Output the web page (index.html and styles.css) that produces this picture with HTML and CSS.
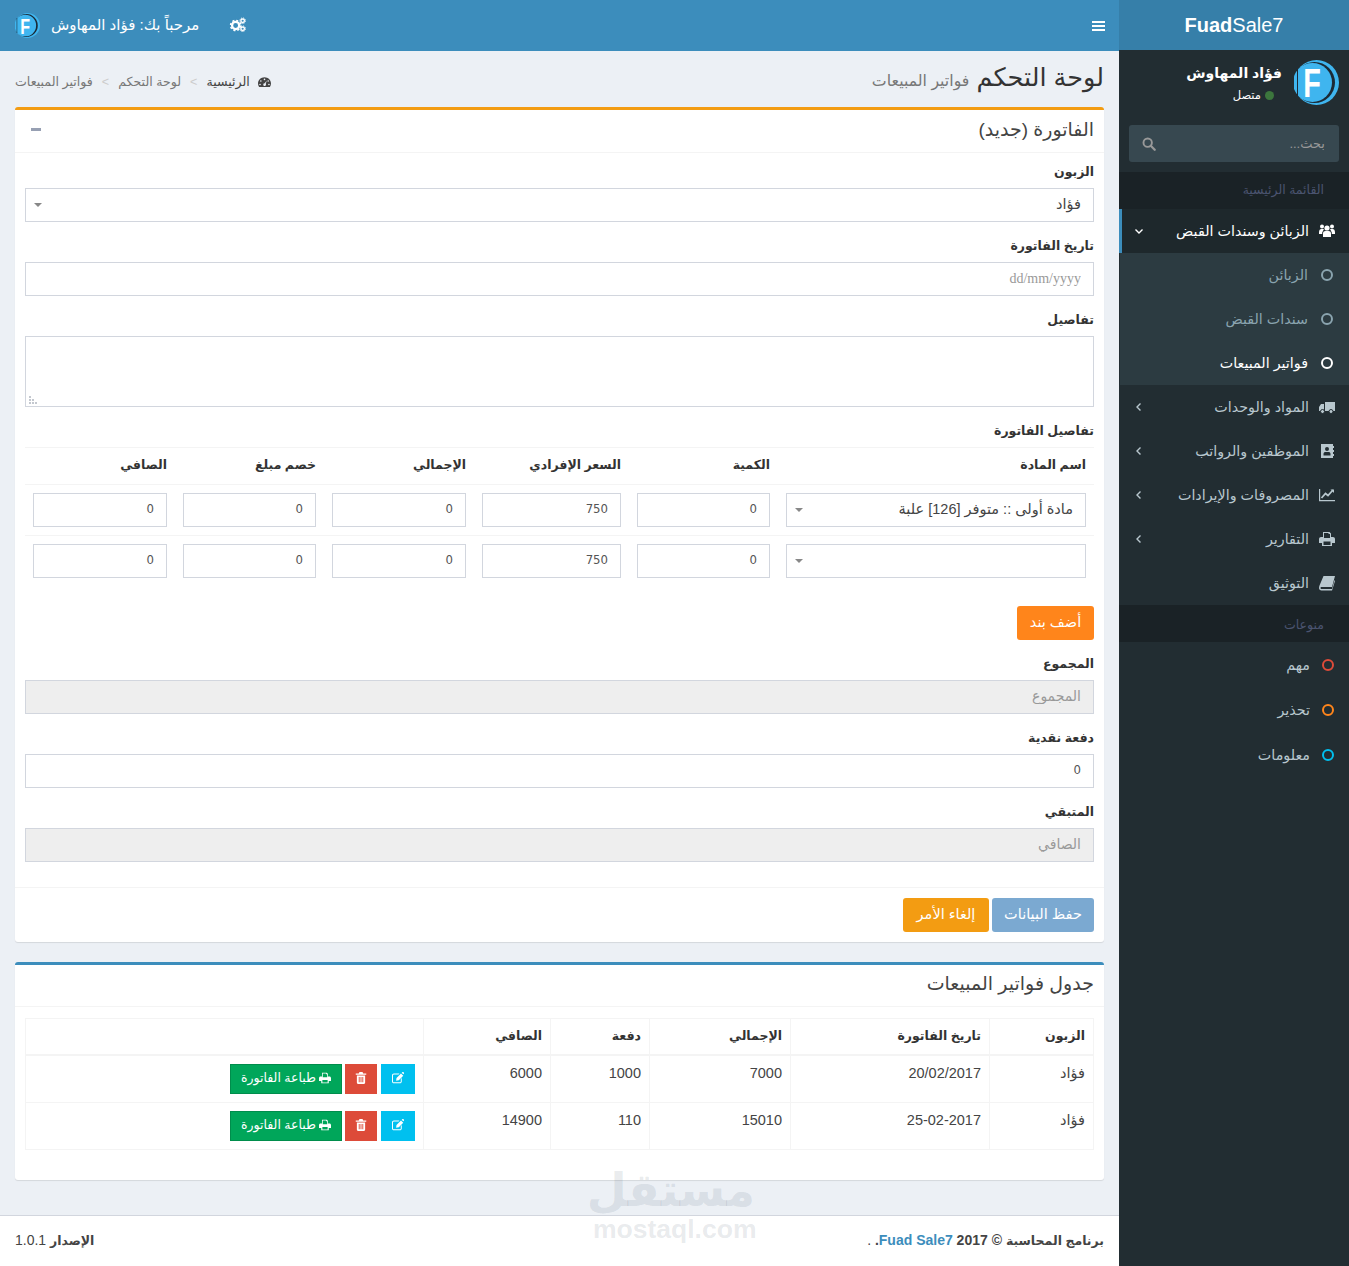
FILE: index.html
```html
<!DOCTYPE html>
<html lang="ar" dir="rtl">
<head>
    <meta charset="UTF-8">
    <title>FuadSale7 - فواتير المبيعات</title>
    <link rel="stylesheet" href="styles.css">
</head>
<body>
    <svg class="sprite" aria-hidden="true">
        <symbol id="i-users" viewBox="0 0 16 16"><circle cx="8" cy="5" r="2.6"/><circle cx="3" cy="3.6" r="2"/><circle cx="13" cy="3.6" r="2"/><path d="M4 14v-3.5C4 8.800 5 8 6.500 8h3C11 8 12 8.800 12 10.500V14zM0 9.500C0 7 1 6 2.500 6H5L3.200 9.500V11H0zM16 9.500C16 7 15 6 13.500 6H11l1.800 3.500V11H16z"/></symbol>
        <symbol id="i-truck" viewBox="0 0 16 16"><path d="M6 3h10v9H6zM0 8l2-3h3v7H0z"/><circle cx="3.500" cy="12.500" r="2" stroke="#222d32"/><circle cx="12" cy="12.500" r="2" stroke="#222d32"/></symbol>
        <symbol id="i-book-user" viewBox="0 0 16 16"><path fill-rule="evenodd" d="M2 1h12v2h1v2h-1v2h1v2h-1v2h1v2h-1v2H2zM8 4a2 2 0 1 0 0 4 2 2 0 0 0 0-4zM4.500 12.500h7V11c0-1.500-1-2-2-2h-3c-1 0-2 .5-2 2z"/></symbol>
        <symbol id="i-chart" viewBox="0 0 16 16"><path d="M0 2h1.200v11H16v1.200H0z"/><path d="M2.500 11l4-4.500 2.500 2L14 3" fill="none" stroke="currentColor" stroke-width="1.800"/><path d="M11.500 2.500H15V6z"/></symbol>
        <symbol id="i-print" viewBox="0 0 16 16"><path fill-rule="evenodd" d="M4 1h6.500L12 2.500V6h2c1 0 2 .8 2 2v4h-3v3H3v-3H0V8c0-1.200 1-2 2-2h2zM5 2v5h6V3h-1.500V2zM4.500 10.500V14h7v-3.500z"/></symbol>
        <symbol id="i-book" viewBox="0 0 16 16"><path d="M4.500 1H16l-3 11H2.500c-.8 0-1 .5-1 1s.4 1 1 1H13l2.500-9 .5 1-3 9.500H2.500C1 15.500 0 14.500 0 13c0-.8.2-1.500.5-2.500z"/></symbol>
        <symbol id="i-search" viewBox="0 0 16 16"><circle cx="6.500" cy="6.500" r="4.800" fill="none" stroke="currentColor" stroke-width="2.200"/><path d="M10 10l4.500 4.500" fill="none" stroke="currentColor" stroke-width="2.600" stroke-linecap="round"/></symbol>
        <symbol id="i-gears" viewBox="0 0 18 16"><circle cx="7" cy="9" r="3.800" fill="none" stroke="currentColor" stroke-width="2.400"/><circle cx="7" cy="9" r="5.400" fill="none" stroke="currentColor" stroke-width="1.600" stroke-dasharray="2.200 2.040"/><circle cx="14.500" cy="4" r="1.900" fill="none" stroke="currentColor" stroke-width="1.500"/><circle cx="14.500" cy="4" r="3" fill="none" stroke="currentColor" stroke-width="1" stroke-dasharray="1.300 1.060"/><circle cx="14.500" cy="12.500" r="1.900" fill="none" stroke="currentColor" stroke-width="1.500"/><circle cx="14.500" cy="12.500" r="3" fill="none" stroke="currentColor" stroke-width="1" stroke-dasharray="1.300 1.060"/></symbol>
        <symbol id="i-gauge" viewBox="0 0 16 14"><path fill-rule="evenodd" d="M8 1c4.400 0 8 3.400 8 7.800 0 1.600-.5 3.100-1.300 4.200H1.300C.5 11.900 0 10.400 0 8.800 0 4.400 3.600 1 8 1zM8 2.800a1 1 0 1 0 0 2 1 1 0 0 0 0-2zM3.500 4.800a1 1 0 1 0 0 2 1 1 0 0 0 0-2zM12.500 4.800a1 1 0 1 0 0 2 1 1 0 0 0 0-2zM2.500 9a1 1 0 1 0 0 2 1 1 0 0 0 0-2zM13.500 9a1 1 0 1 0 0 2 1 1 0 0 0 0-2zM10.800 5L8.300 8.500a1.700 1.700 0 1 0 1.300.8z"/></symbol>
        <symbol id="i-edit" viewBox="0 0 16 16"><path d="M2.500 2H10L8.700 3.300H2.500c-.7 0-1.200.5-1.200 1.200v8c0 .7.5 1.200 1.200 1.200h8c.7 0 1.200-.5 1.200-1.200V9.300L13 8v4.500c0 1.400-1.100 2.500-2.500 2.500h-8C1.100 15 0 13.900 0 12.500v-8C0 3.100 1.100 2 2.500 2z"/><path d="M6 8l6-6 3 3-6 6-3.500.5zM13 1l1-1c.3-.3.7-.3 1 0l1 1c.3.300.3.700 0 1l-1 1z"/></symbol>
        <symbol id="i-trash" viewBox="0 0 14 16"><path fill-rule="evenodd" d="M5 0h4l1 2h4v1.500H0V2h4zM1.500 4.500h11V14c0 1-.6 2-1.500 2H3c-.9 0-1.500-1-1.500-2zM4 6.500V13.500h1.200V6.500zM6.400 6.500V13.500h1.200V6.500zM8.800 6.500V13.500H10V6.500z"/></symbol>
        <symbol id="i-logo" viewBox="0 0 45 45"><circle cx="22.500" cy="22.500" r="22.500" fill="#3fb5ef"/><circle cx="20.500" cy="22.500" r="20.500" fill="#1b2a36"/><circle cx="18.500" cy="22.500" r="19.500" fill="#3fb5ef"/><rect x="3" y="9" width="1" height="27" fill="#1b2a36"/><text x="13" y="37" transform="scale(.72 1)" class="logo-letter">F</text></symbol>
    </svg>

    <div class="wrapper">
        <aside class="sidebar">
            <a class="brand"><b>Fuad</b>Sale7</a>
            <div class="user-panel">
                <svg class="user-logo"><use href="#i-logo"/></svg>
                <div class="user-info">
                    <div class="user-name">فؤاد المهاوش</div>
                    <div class="user-status"><span class="dot"></span>متصل</div>
                </div>
            </div>
            <div class="side-search">
                <span>بحث...</span>
                <svg class="ic"><use href="#i-search"/></svg>
            </div>

            <div class="menu-head">القائمة الرئيسية</div>
            <a class="menu-item open">
                <svg class="ic"><use href="#i-users"/></svg>
                <span class="menu-text">الزبائن وسندات القبض</span>
                <svg class="arrow" viewBox="0 0 10 10"><path d="M1.500 3.500L5 7l3.500-3.500"/></svg>
            </a>
            <div class="submenu">
                <a class="sub-item"><span class="ring"></span>الزبائن</a>
                <a class="sub-item"><span class="ring"></span>سندات القبض</a>
                <a class="sub-item current"><span class="ring"></span>فواتير المبيعات</a>
            </div>
            <a class="menu-item">
                <svg class="ic"><use href="#i-truck"/></svg>
                <span class="menu-text">المواد والوحدات</span>
                <svg class="arrow" viewBox="0 0 10 10"><path d="M6.500 1.500L3 5l3.500 3.500"/></svg>
            </a>
            <a class="menu-item">
                <svg class="ic"><use href="#i-book-user"/></svg>
                <span class="menu-text">الموظفين والرواتب</span>
                <svg class="arrow" viewBox="0 0 10 10"><path d="M6.500 1.500L3 5l3.500 3.500"/></svg>
            </a>
            <a class="menu-item">
                <svg class="ic"><use href="#i-chart"/></svg>
                <span class="menu-text">المصروفات والإيرادات</span>
                <svg class="arrow" viewBox="0 0 10 10"><path d="M6.500 1.500L3 5l3.500 3.500"/></svg>
            </a>
            <a class="menu-item">
                <svg class="ic"><use href="#i-print"/></svg>
                <span class="menu-text">التقارير</span>
                <svg class="arrow" viewBox="0 0 10 10"><path d="M6.500 1.500L3 5l3.500 3.500"/></svg>
            </a>
            <a class="menu-item">
                <svg class="ic"><use href="#i-book"/></svg>
                <span class="menu-text">التوثيق</span>
            </a>

            <div class="menu-head lower">منوعات</div>
            <a class="label-item"><span class="ring red"></span>مهم</a>
            <a class="label-item"><span class="ring orange"></span>تحذير</a>
            <a class="label-item"><span class="ring aqua"></span>معلومات</a>
        </aside>

        <div class="main">
            <header class="topbar">
                <a class="hamburger"><span></span><span></span><span></span></a>
                <div class="top-user">
                    <svg class="top-gears"><use href="#i-gears"/></svg>
                    <span class="welcome">مرحباً بك: فؤاد المهاوش</span>
                    <svg class="top-logo"><use href="#i-logo"/></svg>
                </div>
            </header>

            <main class="content">
                <div class="content-head">
                    <h1>لوحة التحكم <small>فواتير المبيعات</small></h1>
                    <ol class="crumbs">
                        <li class="crumb-home"><svg class="gauge"><use href="#i-gauge"/></svg>الرئيسية</li>
                        <li>لوحة التحكم</li>
                        <li>فواتير المبيعات</li>
                    </ol>
                </div>

                <section class="box box-warning">
                    <div class="box-head">
                        <h3>الفاتورة (جديد)</h3>
                        <span class="minus"></span>
                    </div>
                    <div class="box-body">
                        <div class="field">
                            <label>الزبون</label>
                            <div class="select"><span>فؤاد</span><i class="caret"></i></div>
                        </div>
                        <div class="field">
                            <label>تاريخ الفاتورة</label>
                            <input class="input date" type="text" placeholder="dd/mm/yyyy">
                        </div>
                        <div class="field">
                            <label>تفاصيل</label>
                            <div class="area-wrap">
                                <textarea class="input area"></textarea>
                                <svg class="grip" viewBox="0 0 9 9">
                                    <rect x="0" y="0" width="2" height="2"/><rect x="0" y="3" width="2" height="2"/><rect x="3" y="3" width="2" height="2"/>
                                    <rect x="0" y="6" width="2" height="2"/><rect x="3" y="6" width="2" height="2"/><rect x="6" y="6" width="2" height="2"/>
                                </svg>
                            </div>
                        </div>

                        <label class="lines-title">تفاصيل الفاتورة</label>
                        <table class="lines">
                            <colgroup>
                                <col class="c-item"><col class="c-qty"><col class="c-price">
                                <col class="c-total"><col class="c-disc"><col class="c-net">
                            </colgroup>
                            <thead>
                                <tr>
                                    <th>اسم المادة</th><th>الكمية</th><th>السعر الإفرادي</th>
                                    <th>الإجمالي</th><th>خصم مبلغ</th><th>الصافي</th>
                                </tr>
                            </thead>
                            <tbody>
                                <tr>
                                    <td><div class="select"><span>مادة أولى :: متوفر [126] علبة</span><i class="caret"></i></div></td>
                                    <td><input class="input num" value="0"></td>
                                    <td><input class="input num" value="750"></td>
                                    <td><input class="input num" value="0"></td>
                                    <td><input class="input num" value="0"></td>
                                    <td><input class="input num" value="0"></td>
                                </tr>
                                <tr>
                                    <td><div class="select"><span></span><i class="caret"></i></div></td>
                                    <td><input class="input num" value="0"></td>
                                    <td><input class="input num" value="750"></td>
                                    <td><input class="input num" value="0"></td>
                                    <td><input class="input num" value="0"></td>
                                    <td><input class="input num" value="0"></td>
                                </tr>
                            </tbody>
                        </table>

                        <button class="btn btn-add">أضف بند</button>

                        <div class="field">
                            <label>المجموع</label>
                            <input class="input" type="text" placeholder="المجموع" disabled>
                        </div>
                        <div class="field">
                            <label>دفعة نقدية</label>
                            <input class="input num" value="0">
                        </div>
                        <div class="field">
                            <label>المتبقي</label>
                            <input class="input" type="text" placeholder="الصافي" disabled>
                        </div>
                    </div>
                    <div class="box-foot">
                        <button class="btn btn-save">حفظ البيانات</button>
                        <button class="btn btn-cancel">إلغاء الأمر</button>
                    </div>
                </section>

                <section class="box box-primary">
                    <div class="box-head">
                        <h3>جدول فواتير المبيعات</h3>
                    </div>
                    <div class="box-body">
                        <table class="grid">
                            <colgroup>
                                <col class="g-cust"><col class="g-date"><col class="g-total">
                                <col class="g-paid"><col class="g-net"><col>
                            </colgroup>
                            <thead>
                                <tr><th>الزبون</th><th>تاريخ الفاتورة</th><th>الإجمالي</th><th>دفعة</th><th>الصافي</th><th></th></tr>
                            </thead>
                            <tbody>
                                <tr>
                                    <td>فؤاد</td><td>20/02/2017</td><td>7000</td><td>1000</td><td>6000</td>
                                    <td class="actions">
                                        <div class="act-row">
                                            <a class="act act-edit"><svg class="ic"><use href="#i-edit"/></svg></a>
                                            <a class="act act-del"><svg class="ic"><use href="#i-trash"/></svg></a>
                                            <a class="act act-print"><svg class="ic"><use href="#i-print"/></svg>طباعة الفاتورة</a>
                                        </div>
                                    </td>
                                </tr>
                                <tr>
                                    <td>فؤاد</td><td>25-02-2017</td><td>15010</td><td>110</td><td>14900</td>
                                    <td class="actions">
                                        <div class="act-row">
                                            <a class="act act-edit"><svg class="ic"><use href="#i-edit"/></svg></a>
                                            <a class="act act-del"><svg class="ic"><use href="#i-trash"/></svg></a>
                                            <a class="act act-print"><svg class="ic"><use href="#i-print"/></svg>طباعة الفاتورة</a>
                                        </div>
                                    </td>
                                </tr>
                            </tbody>
                        </table>
                    </div>
                </section>
            </main>

            <footer class="foot">
                <div><strong><span class="ar">برنامج المحاسبة</span> © 2017 <a>Fuad Sale7</a>.</strong> .</div>
                <div class="version"><b class="ar">الإصدار</b> 1.0.1</div>
            </footer>
        </div>
    </div>

    <div class="watermark">
        <div class="wm-ar">مستقل</div>
        <div class="wm-en">mostaql.com</div>
    </div>
</body>
</html>
```

FILE: styles.css
```css
* {
    box-sizing: border-box;
}
html, body {
    margin: 0;
    height: 100%;
}
body {
    font-family: "Liberation Sans", "DejaVu Sans", sans-serif;
    font-size: 14px;
    line-height: 20px;
    color: #333;
    background: #ecf0f5;
    position: relative;
}
.sprite {
    display: none;
}
.wrapper {
    display: flex;
    min-height: 1266px;
}

/* sidebar */
.sidebar {
    width: 230px;
    flex: none;
    background: #222d32;
    color: #b8c7ce;
    font-size: 14.3px;
}
.brand {
    display: block;
    height: 50px;
    line-height: 50px;
    background: #367fa9;
    color: #fff;
    font-size: 20px;
    text-align: center;
    direction: ltr;
}
.user-panel {
    display: flex;
    align-items: center;
    gap: 12px;
    padding: 10px;
    height: 65px;
}
.user-logo {
    width: 45px;
    height: 45px;
    flex: none;
}
.logo-letter {
    direction: ltr;
    font-family: "Liberation Sans", sans-serif;
    font-weight: bold;
    font-size: 40px;
    fill: #fff;
}
.user-name {
    font-weight: bold;
    font-size: 14px;
    color: #fff;
    line-height: 20px;
}
.user-status {
    font-size: 11.5px;
    line-height: 14px;
    margin-top: 5px;
    padding-right: 8px;
    color: #fff;
    display: flex;
    align-items: center;
    gap: 4px;
}
.dot {
    width: 9px;
    height: 9px;
    border-radius: 50%;
    background: #3c763d;
}
.side-search {
    margin: 10px;
    height: 37px;
    background: #374850;
    border-radius: 3px;
    display: flex;
    justify-content: space-between;
    align-items: center;
    padding: 0 14px 0 13px;
    color: #999;
    font-size: 13px;
}
.ic {
    width: 16px;
    height: 16px;
    fill: currentColor;
    flex: none;
}
.side-search .ic {
    width: 14px;
    height: 14px;
}
.menu-head {
    height: 37px;
    line-height: 37px;
    background: #1a2226;
    color: #4b5470;
    font-size: 12.5px;
    padding-right: 25px;
}
.menu-head.lower {
    line-height: 40px;
}
.menu-item {
    display: flex;
    align-items: center;
    height: 44px;
    padding: 0 14px 0 15px;
    gap: 10px;
}
.menu-text {
    flex: 1;
}
.arrow {
    width: 10px;
    height: 10px;
    fill: none;
    stroke: currentColor;
    stroke-width: 1.400;
}
.menu-item.open {
    background: #1e282c;
    color: #fff;
    border-left: 3px solid #3c8dbc;
    padding-left: 12px;
}
.submenu {
    background: #2c3b41;
    margin-left: 1px;
}
.sub-item {
    display: flex;
    align-items: center;
    gap: 13px;
    height: 44px;
    padding-right: 16px;
    color: #8aa4af;
}
.sub-item.current {
    color: #fff;
}
.ring {
    width: 12px;
    height: 12px;
    border: 2px solid currentColor;
    border-radius: 50%;
    flex: none;
}
.label-item {
    display: flex;
    align-items: center;
    gap: 12px;
    height: 45px;
    padding-right: 15px;
}
.red { color: #dd4b39; }
.orange { color: #ff851b; }
.aqua { color: #00c0ef; }

/* top bar */
.main {
    flex: 1;
    min-width: 0;
    display: flex;
    flex-direction: column;
}
.topbar {
    height: 51px;
    background: #3c8dbc;
    color: #fff;
    display: flex;
    align-items: center;
    justify-content: space-between;
    padding: 0 14px 0 15px;
}
.hamburger {
    width: 13px;
    display: flex;
    flex-direction: column;
    gap: 2px;
}
.hamburger span {
    height: 2px;
    background: #fff;
}
.top-user {
    display: flex;
    align-items: center;
}
.top-gears {
    width: 17px;
    height: 15px;
    fill: #fff;
    color: #fff;
    margin-left: 30px;
    margin-top: -3px;
}
.welcome {
    font-size: 15px;
    margin-left: 11px;
    padding-bottom: 2px;
}
.top-logo {
    width: 25px;
    height: 25px;
}

/* content */
.content {
    flex: 1;
    padding: 0 15px;
}
.content-head {
    height: 56px;
    display: flex;
    justify-content: space-between;
    align-items: center;
}
.content-head h1 {
    margin: 0;
    font-size: 25.5px;
    font-weight: normal;
    line-height: 30px;
}
.content-head small {
    font-size: 15.800px;
    color: #777;
}
.crumbs {
    list-style: none;
    margin: 6px 0 0;
    padding: 0;
    display: flex;
    font-size: 12.600px;
    color: #777;
}
.crumbs li + li::before {
    content: ">";
    color: #ccc;
    padding: 0 9px;
}
.crumb-home {
    color: #444;
}
.gauge {
    width: 13px;
    height: 12px;
    fill: #444;
    margin-left: 8px;
    vertical-align: -2px;
}
.box {
    background: #fff;
    border-top: 3px solid #d2d6de;
    border-radius: 3px;
    box-shadow: 0 1px 1px rgba(0,0,0,0.1);
    margin-bottom: 20px;
}
.box-warning { border-top-color: #f39c12; }
.box-primary { border-top-color: #3c8dbc; }
.box-head {
    height: 43px;
    display: flex;
    justify-content: space-between;
    align-items: center;
    padding: 0 10px 3px 63px;
    border-bottom: 1px solid #f4f4f4;
}
.box-primary .box-head {
    height: 42px;
}
.box-head h3 {
    margin: 0;
    font-size: 19px;
    font-weight: normal;
    color: #444;
}
.minus {
    width: 10px;
    height: 3px;
    background: #97a0b3;
    margin-left: -47px;
}
.box-body {
    padding: 10px;
}
.field {
    margin-bottom: 15px;
}
.field label, .lines-title {
    display: block;
    font-weight: bold;
    font-size: 12.500px;
    line-height: 18px;
    margin-bottom: 7px;
}
.input {
    display: block;
    width: 100%;
    height: 34px;
    border: 1px solid #d2d6de;
    padding: 4px 12px 7px;
    font-family: "Liberation Sans", "DejaVu Sans", sans-serif;
    font-size: 14px;
    color: #555;
    background: #fff;
    outline: none;
}
.input::placeholder {
    color: #999;
}
.input:disabled {
    background: #eee;
}
.date::placeholder {
    font-family: "Liberation Serif", serif;
    font-size: 14px;
}
.area-wrap {
    position: relative;
}
.area {
    height: 71px;
    resize: none;
}
.grip {
    position: absolute;
    left: 4px;
    bottom: 2px;
    width: 9px;
    height: 9px;
    fill: #c4c8cf;
}
.num {
    font-family: "DejaVu Sans Condensed", "Liberation Sans", sans-serif;
    font-size: 13px;
}
.select {
    height: 34px;
    border: 1px solid #d2d6de;
    padding: 0 12px 3px 8px;
    display: flex;
    align-items: center;
    justify-content: space-between;
    font-size: 14.500px;
    color: #444;
    background: #fff;
}
.caret {
    width: 0;
    height: 0;
    border-top: 4px solid #888;
    border-left: 4px solid transparent;
    border-right: 4px solid transparent;
    margin-top: 3px;
}

/* invoice lines */
.lines {
    width: 100%;
    table-layout: fixed;
    border-collapse: collapse;
    margin-bottom: 20px;
}
.c-item { width: 316px; }
.c-qty { width: 149px; }
.c-price { width: 155px; }
.c-total { width: 150px; }
.c-disc { width: 149px; }
.c-net { width: 150px; }
.lines th {
    height: 37px;
    padding: 7px 8px 9px;
    text-align: right;
    font-size: 12.500px;
    border-top: 1px solid #f4f4f4;
    border-bottom: 1px solid #f4f4f4;
}
.lines td {
    padding: 8px;
    border-bottom: 1px solid #f4f4f4;
}
.lines tr:last-child td {
    border-bottom: 0;
}
.btn {
    height: 34px;
    border: 1px solid transparent;
    border-radius: 3px;
    padding: 0 0 3px;
    color: #fff;
    font-family: "Liberation Sans", "DejaVu Sans", sans-serif;
    font-size: 14.500px;
}
.btn-add {
    display: block;
    width: 77px;
    background: #ff851b;
    margin-bottom: 15px;
}
.btn-save {
    background: #7ba9d1;
    width: 102px;
}
.btn-cancel {
    background: #f39c12;
    width: 86px;
}
.box-foot {
    border-top: 1px solid #f4f4f4;
    padding: 10px;
    height: 55px;
    display: flex;
    gap: 3px;
}

/* invoices table */
.grid {
    width: 100%;
    table-layout: fixed;
    border-collapse: collapse;
    margin: 1px 0 20px;
    border: 1px solid #f4f4f4;
    font-size: 14.500px;
}
.g-cust { width: 104px; }
.g-date { width: 199px; }
.g-total { width: 141px; }
.g-paid { width: 99px; }
.g-net { width: 127px; }
.grid th, .grid td {
    padding: 8px;
    text-align: right;
    border: 1px solid #f4f4f4;
}
.grid th {
    height: 35px;
    padding: 7px 8px 8px;
    font-size: 12.500px;
    border-bottom-width: 2px;
}
.grid td {
    height: 47px;
    padding-top: 7px;
    vertical-align: top;
    color: #444;
}
.grid td.actions {
    padding-top: 8px;
}
.act-row {
    display: flex;
    gap: 3px;
}
.act {
    display: flex;
    align-items: center;
    justify-content: center;
    height: 30px;
    padding-bottom: 3px;
    color: #fff;
    font-size: 12.500px;
    gap: 3px;
}
.act .ic {
    width: 12px;
    height: 12px;
}
.act-edit { width: 34px; background: #00c0ef; margin-left: 1px; }
.act-del { width: 32px; background: #dd4b39; }
.act-print { width: 112px; background: #00a65a; border: 1px solid #008d4c; }

/* footer */
.foot {
    height: 51px;
    background: #fff;
    border-top: 1px solid #d2d6de;
    padding: 14px 15px;
    display: flex;
    justify-content: space-between;
    font-size: 14px;
    color: #444;
}
.foot .ar {
    font-size: 12.500px;
}
.foot a {
    color: #3c8dbc;
}

.watermark {
    position: absolute;
    left: 593px;
    top: 1164px;
    width: 162px;
    text-align: center;
    color: rgba(90, 105, 125, 0.14);
    font-weight: bold;
    pointer-events: none;
}
.wm-ar {
    font-size: 46px;
    line-height: 52px;
    padding-left: 5px;
}
.wm-en {
    font-size: 26.500px;
    line-height: 26px;
    direction: ltr;
}
```
